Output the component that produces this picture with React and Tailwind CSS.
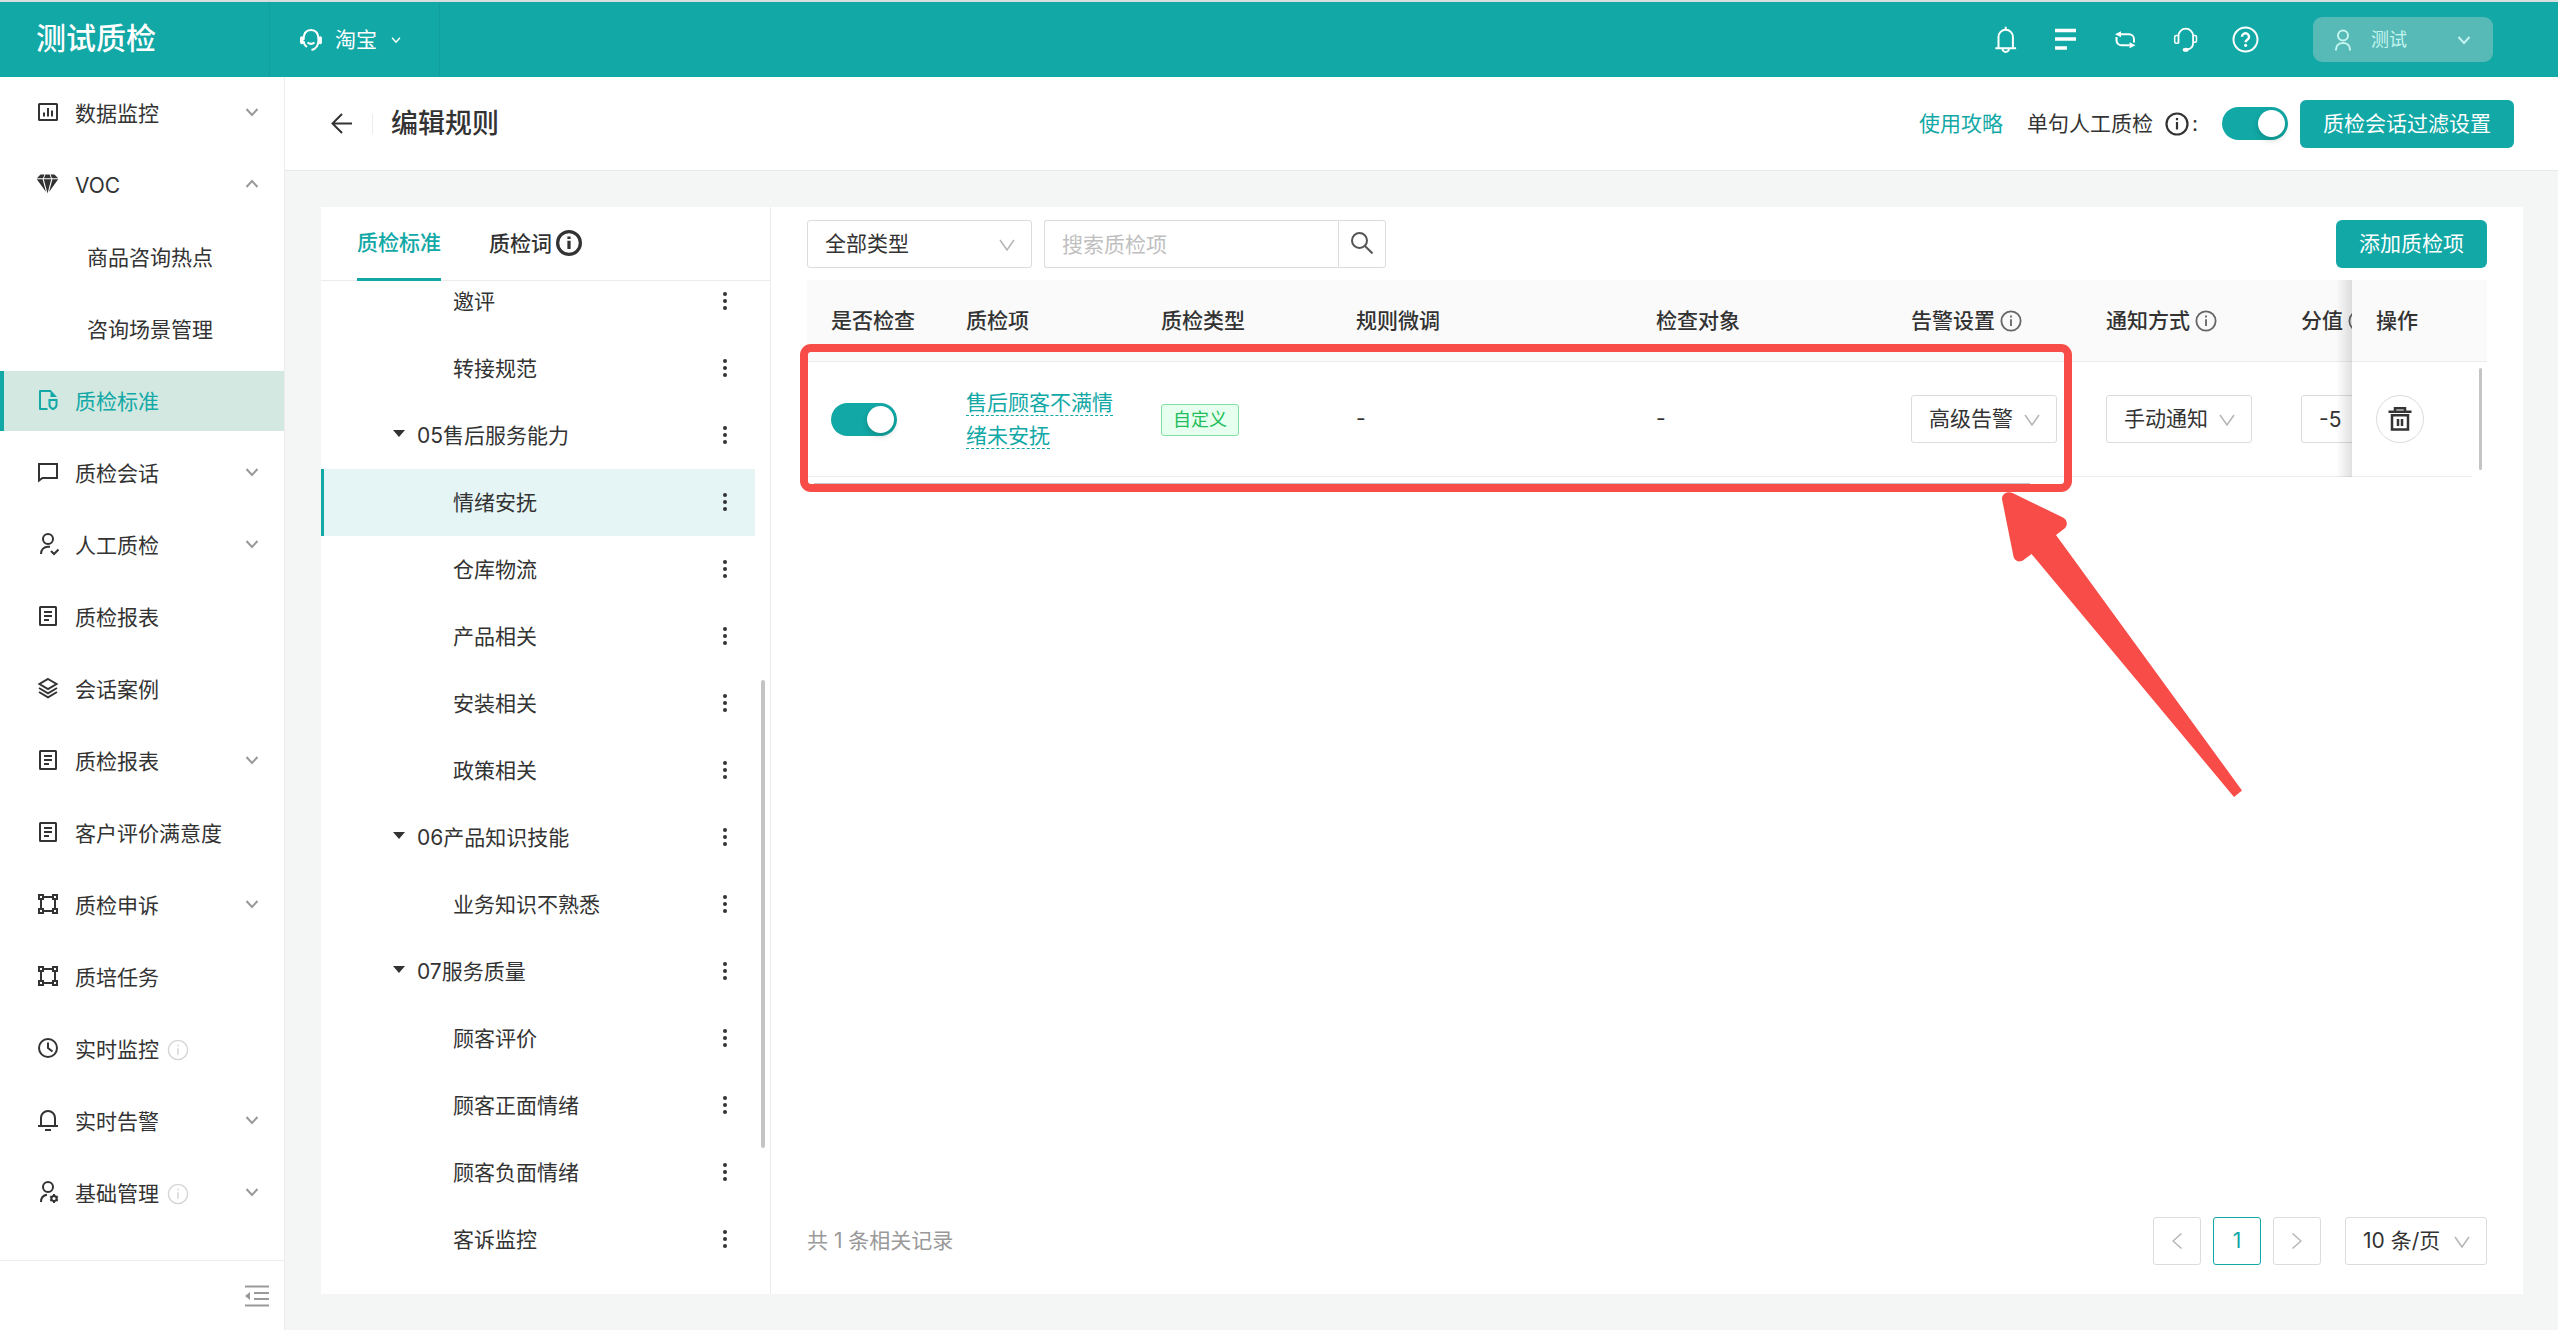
import React from 'react'

const strokeProps = { fill: 'none', stroke: 'currentColor', strokeWidth: 2 }

// 24px side menu icons
const menuIcons = {
    chart: (
        <g {...strokeProps}>
            <rect x="3" y="4" width="18" height="16" rx="0.5" />
            <path d="M8 16.5v-4M12 16.5V8M16 16.5v-6" />
        </g>
    ),
    gem: (
        <g fill="currentColor">
            <path d="M4.5 2.5h4L7 6.200H.8zM9.400 2.500h4.200L15 6.200H8zM14.500 2.500h4l3.700 3.700H16zM.8 7.200h5.800L10 20zM7.800 7.200h7.400L11.500 21.500zM16.400 7.200h5.800L13 20z" />
        </g>
    ),
    standard: (
        <g {...strokeProps}>
            <path d="M11.5 21H4V3h11" strokeLinejoin="round" />
            <path d="M14.500 2l6.500 7h-6.500z" fill="currentColor" stroke="none" />
            <path d="M13.5 12h7v5c0 1.800-1.500 3.200-3.500 4.200-2-1-3.500-2.400-3.500-4.200z" />
        </g>
    ),
    chat: (
        <g {...strokeProps}>
            <path d="M3 4h18v14H6.500L3 20.500z" />
        </g>
    ),
    userCheck: (
        <g {...strokeProps}>
            <circle cx="12" cy="7" r="5" />
            <path d="M5 22c0-4.500 3-7.300 7-7.300h2M15 19l3 3 4.500-4.500" />
        </g>
    ),
    report: (
        <g {...strokeProps}>
            <rect x="4" y="3" width="16" height="18" rx="0.5" />
            <path d="M8 8h8M8 12h8M8 16h5" />
        </g>
    ),
    layers: (
        <g {...strokeProps}>
            <path d="M12 3l8.500 5-8.500 5-8.500-5zM3 12l9 5.300 9-5.300M3 16l9 5.300 9-5.300" />
        </g>
    ),
    frame: (
        <g {...strokeProps}>
            <path d="M3 3h4v4H3zM17 3h4v4h-4zM3 17h4v4H3zM17 17h4v4h-4zM8 5h8M8 19h8M5 8v8M19 8v8" />
        </g>
    ),
    clock: (
        <g {...strokeProps}>
            <circle cx="12" cy="12" r="9" />
            <path d="M12 6.500V12l4.500 3.500" />
        </g>
    ),
    bell: (
        <g {...strokeProps}>
            <path d="M5 18v-8a7 7 0 0 1 14 0v8M2 18h20M9 22h6" />
        </g>
    ),
    userGear: (
        <g {...strokeProps}>
            <circle cx="12" cy="7" r="5" />
            <path d="M5 22c0-4 2.300-6.700 6-7.200" />
            <circle cx="18" cy="18.5" r="2.600" />
            <path d="M18 14v2M18 21v2M14.200 16.300l1.700 1M20.100 19.700l1.700 1M14.200 20.700l1.700-1M20.100 17.300l1.700-1" />
        </g>
    ),
}

const menu = [
    { text: '数据监控', icon: 'chart', arrow: 'down' },
    { text: 'VOC', icon: 'gem', arrow: 'up' },
    { text: '商品咨询热点', child: true },
    { text: '咨询场景管理', child: true },
    { text: '质检标准', icon: 'standard', active: true },
    { text: '质检会话', icon: 'chat', arrow: 'down' },
    { text: '人工质检', icon: 'userCheck', arrow: 'down' },
    { text: '质检报表', icon: 'report' },
    { text: '会话案例', icon: 'layers' },
    { text: '质检报表', icon: 'report', arrow: 'down' },
    { text: '客户评价满意度', icon: 'report' },
    { text: '质检申诉', icon: 'frame', arrow: 'down' },
    { text: '质培任务', icon: 'frame' },
    { text: '实时监控', icon: 'clock', info: true },
    { text: '实时告警', icon: 'bell', arrow: 'down' },
    { text: '基础管理', icon: 'userGear', info: true, arrow: 'down' },
]

const tree = [
    { text: '邀评' },
    { text: '转接规范' },
    { text: '05售后服务能力', group: true },
    { text: '情绪安抚', active: true },
    { text: '仓库物流' },
    { text: '产品相关' },
    { text: '安装相关' },
    { text: '政策相关' },
    { text: '06产品知识技能', group: true },
    { text: '业务知识不熟悉' },
    { text: '07服务质量', group: true },
    { text: '顾客评价' },
    { text: '顾客正面情绪' },
    { text: '顾客负面情绪' },
    { text: '客诉监控' },
]

function Chevron({ className, up }) {
    return (
        <svg viewBox="0 0 14 10" className={className} fill="none" stroke="currentColor" strokeWidth="2">
            <path d={up ? 'M1.500 8L7 2l5.500 6' : 'M1.500 2L7 8l5.500-6'} />
        </svg>
    )
}

function InfoIcon({ className, width }) {
    return (
        <svg viewBox="0 0 24 24" className={className} fill="none" stroke="currentColor" strokeWidth={width}>
            <circle cx="12" cy="12" r="10.5" />
            <path d="M12 10v7.500M12 6v2.300" />
        </svg>
    )
}

function HeaderIcon({ label, children }) {
    return (
        <button aria-label={label}>
            <svg viewBox="0 0 27 27" className="size-[27px]" fill="none" stroke="currentColor" strokeWidth="2">
                {children}
            </svg>
        </button>
    )
}

function Toggle({ label }) {
    return (
        <input
            type="checkbox"
            role="switch"
            aria-label={label}
            defaultChecked
            className="block h-[33px] w-[66px] shrink-0 appearance-none rounded-full bg-gray-300 p-[3px] before:block before:size-[27px] before:rounded-full before:bg-white before:shadow-[0_3px_6px_rgba(0,35,11,0.2)] checked:bg-[#11a8a6] checked:before:translate-x-[33px]"
        />
    )
}

function Select({ label, value, className }) {
    return (
        <div className={`relative h-12 ${className}`}>
            <select aria-label={label} className="size-full appearance-none rounded-[3px] border border-[#dcdcdc] bg-white pl-[17px]">
                <option>{value}</option>
            </select>
            <svg viewBox="0 0 16 12" className="pointer-events-none absolute top-[19px] right-[17px] h-3 w-4" fill="none" stroke="#b5b5b5" strokeWidth="1.5">
                <path d="M1 1l7 10 7-10" />
            </svg>
        </div>
    )
}

function Header() {
    return (
        <header className="flex h-[77px] shrink-0 items-stretch border-t-2 border-[#d6dfde] bg-[#11a8a6] text-white">
            <div className="flex w-[270px] items-center border-r border-black/5 pb-1 pl-9">
                <h1 className="text-[30px] font-medium">测试质检</h1>
            </div>
            <div className="flex w-[170px] items-center border-r border-black/5">
                <button className="flex items-center pl-[29px]">
                    <svg viewBox="0 0 24 24" className="size-6" fill="none" stroke="currentColor" strokeWidth="2">
                        <path d="M4.500 12C4.500 5.500 7.500 2 12 2s7.500 3.500 7.500 10c0 5.500-3 9-7 10M4.500 13c.3 2.700 1.500 4.700 3.500 6M8.500 14.500c2 1.600 5 1.600 7 0" />
                        <path d="M2.800 10v4.500M21.200 10v4.500" strokeWidth="3.500" strokeLinecap="round" />
                    </svg>
                    <span className="ml-3">淘宝</span>
                    <Chevron className="ml-[14px] h-2 w-[10px]" />
                </button>
            </div>
            <nav className="ml-auto flex items-center gap-[33px]">
                <HeaderIcon label="通知">
                    <path d="M6.500 22V11a7.200 7.200 0 0 1 14.400 0v11M3.300 22.300h20.800M13.700.7v3M10.500 23a3.200 3 0 0 0 6.400 0" />
                </HeaderIcon>
                <HeaderIcon label="列表">
                    <path d="M3 4.500h21M3 13h21M3 22h12" strokeWidth="3.5" />
                </HeaderIcon>
                <HeaderIcon label="切换">
                    <path d="M8 8.300h9a5 5 0 0 1 5 5v3.200M4.500 11v3.300a5 5 0 0 0 5 5h8" />
                    <path d="M3 8.300l6-3v6zM23.500 19.300l-6-3v6z" fill="currentColor" stroke="none" />
                </HeaderIcon>
                <HeaderIcon label="客服">
                    <path d="M6.500 17.300V10a7.300 7.300 0 0 1 14.600 0v7c0 4-2.300 6-6 6.500" strokeWidth="1.8" />
                    <path d="M6.500 9.500H4.200a1.500 1.500 0 0 0-1.500 1.500v4.800a1.500 1.500 0 0 0 1.500 1.500h2.300M21 9.500h2a1.500 1.500 0 0 1 1.500 1.500v3.800a1.500 1.500 0 0 1-1.500 1.500h-2" strokeWidth="1.5" />
                    <ellipse cx="13.7" cy="23.7" rx="3" ry="2" fill="currentColor" stroke="none" />
                </HeaderIcon>
                <HeaderIcon label="帮助">
                    <circle cx="13.5" cy="13.5" r="12" />
                    <path d="M10 10.800a3.500 3.500 0 1 1 5.300 3c-1.200.7-1.700 1.200-1.700 2.500" strokeWidth="2.5" />
                    <circle cx="13.6" cy="19.3" r="1.6" fill="currentColor" stroke="none" />
                </HeaderIcon>
            </nav>
            <button className="mt-[15px] mr-[65px] ml-[54px] flex h-[45px] w-[180px] items-center rounded-[9px] bg-[#58bab7] pr-[22px] pl-[22px] text-lg text-[#c4f5f0]">
                <svg viewBox="0 0 16 22" className="h-[22px] w-4" fill="none" stroke="currentColor" strokeWidth="2">
                    <circle cx="8" cy="6.5" r="5" />
                    <path d="M1 21.500v-1c0-4 3-6.500 7-6.500s7 2.500 7 6.500v1" />
                </svg>
                <span className="ml-5">测试</span>
                <Chevron className="ml-auto h-[10px] w-[14px]" />
            </button>
        </header>
    )
}

function Sidebar() {
    return (
        <aside className="flex w-[285px] shrink-0 flex-col border-r border-[#ececec] bg-white">
            <ul className="flex flex-1 flex-col gap-3 pt-[6px]">
                {menu.map((item, i) => (
                    <li key={i}>
                        <a
                            href="#"
                            className={`flex h-[60px] items-center border-l-4 pt-0.5 pr-[25px] ${item.child ? 'pl-[83px]' : 'pl-8'} ${item.active ? 'border-[#11a8a6] bg-[#d2e8e1] text-[#11a8a6]' : 'border-transparent'}`}
                        >
                            {item.icon && (
                                <svg viewBox="0 0 24 24" className="mr-[15px] mb-1 size-6">
                                    {menuIcons[item.icon]}
                                </svg>
                            )}
                            <span>{item.text}</span>
                            {item.info && <InfoIcon className="ml-2 size-[22px] text-[#d4d4d4]" width={1.5} />}
                            {item.arrow && (
                                <Chevron up={item.arrow === 'up'} className="mb-1 ml-auto h-[10px] w-[14px] text-[#999]" />
                            )}
                        </a>
                    </li>
                ))}
            </ul>
            <div className="flex h-[70px] items-center justify-end border-t border-[#ececec] pr-[15px]">
                <button aria-label="收起菜单">
                    <svg viewBox="0 0 24 24" className="size-6 text-[#999]" fill="none" stroke="currentColor" strokeWidth="2">
                        <path d="M0 2.500h24M9 9h15M9 15h15M0 21.500h24" />
                        <path d="M0 12l5-4v8z" fill="currentColor" stroke="none" />
                    </svg>
                </button>
            </div>
        </aside>
    )
}

function PageHeader() {
    return (
        <div className="flex h-[94px] shrink-0 items-center border-b border-[#e6eaea] bg-white pr-11 pl-[46px]">
            <button aria-label="返回">
                <svg viewBox="0 0 21 21" className="size-[21px]" fill="none" stroke="currentColor" strokeWidth="2">
                    <path d="M21 10.500H2M11 1L1.500 10.500 11 20" />
                </svg>
            </button>
            <span className="ml-5 h-5 w-px bg-[#ececec]" />
            <h2 className="ml-[18px] text-[27px] font-medium">编辑规则</h2>
            <a href="#" className="ml-auto text-[#11a8a6]">使用攻略</a>
            <span className="ml-6">单句人工质检</span>
            <InfoIcon className="ml-3 size-6" width={2.2} />
            <span className="ml-[3px] w-[30px]">:</span>
            <Toggle label="单句人工质检" />
            <button className="ml-3 h-12 rounded-md bg-[#11a8a6] px-[23px] text-white">质检会话过滤设置</button>
        </div>
    )
}

function RuleTree() {
    return (
        <section className="flex w-[450px] shrink-0 flex-col border-r border-[#ececec]">
            <div role="tablist" className="flex h-[74px] shrink-0 gap-12 border-b border-[#ececec] pl-9 font-medium">
                <button role="tab" aria-selected="true" className="-mb-px border-b-[3px] border-[#11a8a6] text-[#11a8a6]">
                    质检标准
                </button>
                <button role="tab" aria-selected="false" className="flex items-center gap-1">
                    质检词
                    <InfoIcon className="mb-0.5 size-[26px]" width={3} />
                </button>
            </div>
            <div className="relative flex-1 overflow-hidden">
                <ul className="-mt-[13px] mr-[15px]">
                    {tree.map((node) => (
                        <li
                            key={node.text}
                            className={`flex h-[67px] items-center border-l-[3px] pr-[18px] ${node.active ? 'border-[#11a8a6] bg-[#e5f5f5]' : 'border-transparent'} ${node.group ? 'pl-[69px]' : 'pl-[129px]'}`}
                        >
                            {node.group && (
                                <svg viewBox="0 0 12 8" className="mr-3 mb-1 h-2 w-3" fill="currentColor">
                                    <path d="M0 0h12L6 7z" />
                                </svg>
                            )}
                            <span>{node.text}</span>
                            <button aria-label={`${node.text}更多操作`} className="mb-0.5 ml-auto">
                                <svg viewBox="0 0 24 24" className="size-6" fill="currentColor">
                                    <circle cx="12" cy="5" r="2" />
                                    <circle cx="12" cy="12" r="2" />
                                    <circle cx="12" cy="19" r="2" />
                                </svg>
                            </button>
                        </li>
                    ))}
                </ul>
                <span className="absolute top-[399px] right-[5px] h-[468px] w-1 rounded-full bg-[#c4c4c4]" />
            </div>
        </section>
    )
}

function RuleTable() {
    return (
        <div className="relative mt-3">
            <table className="w-full table-fixed border-separate border-spacing-0 text-left">
                <colgroup>
                    <col className="w-[135px]" />
                    <col className="w-[195px]" />
                    <col className="w-[195px]" />
                    <col />
                    <col className="w-[255px]" />
                    <col className="w-[195px]" />
                    <col className="w-[195px]" />
                    <col className="w-[75px]" />
                    <col className="w-[120px]" />
                    <col className="w-[15px]" />
                </colgroup>
                <thead>
                    <tr className="h-[82px] bg-[#fafafa] *:border-b *:border-[#ececec] *:px-6 *:font-medium *:whitespace-nowrap">
                        <th>是否检查</th>
                        <th>质检项</th>
                        <th>质检类型</th>
                        <th>规则微调</th>
                        <th>检查对象</th>
                        <th>
                            <div className="flex items-center gap-[5px]">
                                告警设置
                                <InfoIcon className="size-[22px] text-[#666]" width={2} />
                            </div>
                        </th>
                        <th>
                            <div className="flex items-center gap-[5px]">
                                通知方式
                                <InfoIcon className="size-[22px] text-[#666]" width={2} />
                            </div>
                        </th>
                        <th className="overflow-hidden">
                            <div className="flex items-center gap-[5px]">
                                分值
                                <InfoIcon className="size-[22px] shrink-0 text-[#666]" width={2} />
                            </div>
                        </th>
                        <th>操作</th>
                        <td />
                    </tr>
                </thead>
                <tbody>
                    <tr className="h-[115px] *:border-b *:border-[#ececec] *:px-6">
                        <td>
                            <Toggle label="是否检查" />
                        </td>
                        <td>
                            <a href="#" className="leading-[33px] text-[#11a8a6] underline decoration-dashed decoration-1 underline-offset-[5px]">
                                售后顾客不满情绪未安抚
                            </a>
                        </td>
                        <td>
                            <span className="inline-flex h-8 items-center rounded-[3px] border border-[#7fe3a3] bg-[#e6ffee] px-[11px] text-lg text-[#23bd5c]">
                                自定义
                            </span>
                        </td>
                        <td>-</td>
                        <td>-</td>
                        <td>
                            <Select label="告警设置" value="高级告警" className="w-[146px]" />
                        </td>
                        <td>
                            <Select label="通知方式" value="手动通知" className="w-[146px]" />
                        </td>
                        <td className="overflow-hidden">
                            <input aria-label="分值" defaultValue="-5" className="h-12 w-24 rounded-[3px] border border-[#dcdcdc] px-[17px]" />
                        </td>
                        <td>
                            <button aria-label="删除" className="flex size-12 items-center justify-center rounded-full border border-[#dcdcdc]">
                                <svg viewBox="0 0 24 24" className="size-6" fill="none" stroke="currentColor" strokeWidth="2.5">
                                    <path d="M.5 4.800h23M7 4V1.300h10V4M4 8.300h16v14.200H4zM10 12v7M14 12v7" />
                                </svg>
                            </button>
                        </td>
                        <td className="border-transparent!" />
                    </tr>
                </tbody>
            </table>

            {/* shadow of the pinned column */}
            <span className="absolute top-0 right-[135px] h-full w-4 bg-linear-to-r from-black/0 to-black/12" />
            <span className="absolute top-[88px] right-[5px] h-[102px] w-[3px] rounded-full bg-[#c4c4c4]" />
            <span className="absolute top-[203px] right-[457px] left-[7px] h-1 bg-[#c4c4c4]" />

            {/* highlighted row */}
            <div className="absolute top-16 right-[415px] -left-[7px] h-[148px] rounded-[11px] border-8 border-[#f84c48]" />
            <svg viewBox="0 0 240 306" className="absolute top-[212px] right-[245px] h-[306px] w-[240px]" fill="#f84c48">
                <path d="M0 7C0 2 5-1 10 .8L61 25.500C65.500 28 66 33 62.500 36.500L54 43l186 255.500-8 6.500L29.500 62l-8 6C17 71 12.500 69 11.500 64.500z" />
            </svg>
        </div>
    )
}

function Pagination() {
    return (
        <div className="mt-auto flex items-center text-[#999]">
            <span>共 1 条相关记录</span>
            <div className="ml-auto flex gap-3">
                <button aria-label="上一页" className="flex size-12 items-center justify-center rounded-[3px] border border-[#dcdcdc]">
                    <svg viewBox="0 0 10 16" className="h-4 w-[10px]" fill="none" stroke="#b5b5b5" strokeWidth="1.5">
                        <path d="M9.500.5L1 8l8.500 7.500" />
                    </svg>
                </button>
                <button className="size-12 rounded-[3px] border border-[#11a8a6] text-[#11a8a6]">1</button>
                <button aria-label="下一页" className="flex size-12 items-center justify-center rounded-[3px] border border-[#dcdcdc]">
                    <svg viewBox="0 0 10 16" className="h-4 w-[10px]" fill="none" stroke="#b5b5b5" strokeWidth="1.5">
                        <path d="M.5.5L9 8 .5 15.500" />
                    </svg>
                </button>
            </div>
            <Select label="每页条数" value="10 条/页" className="ml-6 w-[142px] text-[#333]" />
        </div>
    )
}

function App() {
    return (
        <div className="flex min-h-screen flex-col bg-[#f3f6f5] font-['Inter','Noto_Sans_CJK_SC',sans-serif] text-[21px] leading-8 text-[#333]">
            <Header />
            <div className="flex flex-1">
                <Sidebar />
                <main className="flex min-w-0 flex-1 flex-col">
                    <PageHeader />
                    <div className="my-9 mr-[35px] ml-9 flex flex-1 bg-white">
                        <RuleTree />
                        <section className="flex min-w-0 flex-1 flex-col px-9 pt-[13px] pb-[29px]">
                            <div className="flex">
                                <Select label="质检类型" value="全部类型" className="w-[225px]" />
                                <input
                                    type="text"
                                    aria-label="搜索质检项"
                                    placeholder="搜索质检项"
                                    className="ml-3 h-12 w-[294px] rounded-l-[3px] border border-r-0 border-[#dcdcdc] px-[17px] placeholder:text-[#bfbfbf]"
                                />
                                <button aria-label="搜索" className="flex size-12 items-center justify-center rounded-r-[3px] border border-[#dcdcdc] pb-0.5">
                                    <svg viewBox="0 0 22 22" className="size-[22px]" fill="none" stroke="#555" strokeWidth="2">
                                        <circle cx="8.5" cy="8.5" r="7.5" />
                                        <path d="M14 14l7.500 7.500" />
                                    </svg>
                                </button>
                                <button className="ml-auto h-12 rounded-md bg-[#11a8a6] px-[23px] text-white">添加质检项</button>
                            </div>
                            <RuleTable />
                            <Pagination />
                        </section>
                    </div>
                </main>
            </div>
        </div>
    )
}

export default App
